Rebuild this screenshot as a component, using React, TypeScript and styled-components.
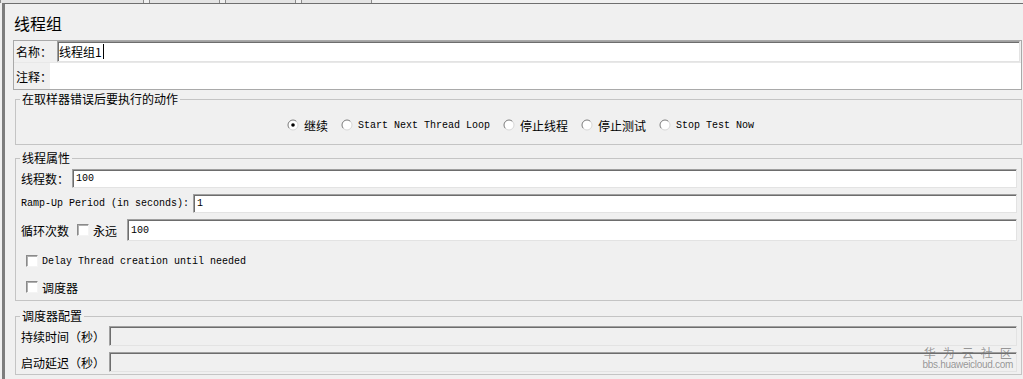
import React from 'react';
import styled, { createGlobalStyle } from 'styled-components';

const cjk = `"Noto Sans CJK SC", "Liberation Sans", sans-serif`;
const mono = `"Liberation Mono", "Noto Sans CJK SC", monospace`;

const GlobalStyle = createGlobalStyle`
  * { box-sizing: border-box; }
  html, body { margin: 0; padding: 0; background: #f0f0f0; }
  body { font-family: ${cjk}; font-size: 12px; color: #000; }
`;

const Screen = styled.div`
  position: relative;
  width: 1023px;
  height: 379px;
  overflow: hidden;
  background: #f0f0f0;
  display: flex;
  flex-direction: column;
`;

const TabStrip = styled.div`
  display: flex;
  gap: 5px;
  height: 3px;
  flex-shrink: 0;
`;

const TabStub = styled.div<{ $w: number }>`
  width: ${p => p.$w}px;
  background: #e4e4e4;
  border-left: 1px solid #8c8c8c;
  border-right: 1px solid #8c8c8c;
`;

const Frame = styled.div`
  flex: 1;
  margin-left: 2px;
  border-top: 1px solid #6f6f6f;
  border-left: 3px solid #7d7d7d;
  padding: 0 1px 0 8px;
  display: flex;
  flex-direction: column;
`;

const Title = styled.div`
  padding: 8px 0 0 1px;
  font-size: 16px;
  line-height: 22px;
  height: 30px;
`;

const NameBox = styled.div`
  margin-top: 6px;
  border: 1px solid #a9a9a9;
  display: flex;
  flex-direction: column;
`;

const NameRow = styled.div`
  display: flex;
  height: 21px;
`;

const CommentRow = styled.div`
  display: flex;
  height: 27px;
  border-top: 1px solid #e8e8e8;
`;

const RowLabel = styled.div<{ $w: number }>`
  width: ${p => p.$w}px;
  flex-shrink: 0;
  padding-left: 2px;
  display: flex;
  align-items: center;
  white-space: nowrap;
`;

const CommentArea = styled.div`
  flex: 1;
  background: #fff;
`;

const Field = styled.div<{ $disabled?: boolean; $mono?: boolean }>`
  flex: 1;
  display: flex;
  align-items: center;
  padding-left: ${p => (p.$mono ? 3 : 1)}px;
  margin-right: 1px;
  background: ${p => (p.$disabled ? '#f0f0f0' : '#fff')};
  border-top: 1px solid #a0a0a0;
  border-left: 1px solid #a0a0a0;
  border-bottom: 1px solid #e3e3e3;
  border-right: 1px solid #e3e3e3;
  box-shadow: inset 1px 1px 0 #6d6d6d;
  font-family: ${p => (p.$mono ? mono : cjk)};
  font-size: ${p => (p.$mono ? '10px' : '12px')};
  white-space: nowrap;
`;

const Caret = styled.span`
  display: inline-block;
  width: 1px;
  height: 15px;
  margin-left: 1px;
  background: #000;
`;

const Group = styled.fieldset<{ $top: number }>`
  margin: ${p => p.$top}px 0 0 2px;
  padding: 0 3px 0 4px;
  border: 1px solid #c4c4c4;
  min-width: 0;
  display: flex;
  flex-direction: column;
`;

const Legend = styled.legend`
  padding: 0 2px;
  font-size: 12px;
  line-height: 14px;
`;

const RadioRow = styled.div`
  height: 38px;
  display: flex;
  align-items: center;
  justify-content: center;
  gap: 13px;
  padding-left: 3px;
`;

const Choice = styled.label<{ $mono?: boolean }>`
  display: flex;
  align-items: center;
  gap: 5px;
  font-family: ${p => (p.$mono ? mono : cjk)};
  font-size: ${p => (p.$mono ? '10px' : '12px')};
  white-space: nowrap;
`;

const Stack = styled.div<{ $top: number; $bottom: number }>`
  display: flex;
  flex-direction: column;
  gap: 6px;
  padding: ${p => p.$top}px 0 ${p => p.$bottom}px 0;
`;

const FormRow = styled.div<{ $h: number; $mt?: number }>`
  display: flex;
  align-items: stretch;
  height: ${p => p.$h}px;
  margin-top: ${p => p.$mt || 0}px;
`;

const FieldLabel = styled.div<{ $w: number; $mono?: boolean }>`
  width: ${p => p.$w}px;
  flex-shrink: 0;
  display: flex;
  align-items: center;
  gap: 4px;
  padding-left: 1px;
  font-family: ${p => (p.$mono ? mono : cjk)};
  font-size: ${p => (p.$mono ? '10px' : '12px')};
  white-space: nowrap;
`;

const CheckRow = styled.label<{ $mono?: boolean }>`
  display: flex;
  align-items: center;
  gap: 4px;
  height: 20px;
  padding-left: 6px;
  font-family: ${p => (p.$mono ? mono : cjk)};
  font-size: ${p => (p.$mono ? '10px' : '12px')};
  white-space: nowrap;
`;

const Box = styled.span<{ $ml?: number }>`
  display: inline-block;
  width: 12px;
  height: 12px;
  margin-left: ${p => p.$ml || 0}px;
  background: #fff;
  border-top: 1px solid #8a8a8a;
  border-left: 1px solid #8a8a8a;
  border-bottom: 1px solid #f4f4f4;
  border-right: 1px solid #f4f4f4;
  box-shadow: inset 1px 1px 0 #b0b0b0;
`;

const Watermark = styled.div`
  position: absolute;
  right: 10px;
  bottom: 8px;
  display: flex;
  flex-direction: column;
  align-items: center;
  color: rgba(120, 120, 120, 0.75);
  pointer-events: none;
`;

const WmTitle = styled.div`
  font-family: ${cjk};
  font-size: 12px;
  line-height: 13px;
  letter-spacing: 7px;
  margin-right: -7px;
`;

const WmUrl = styled.div`
  font-family: "Liberation Sans", sans-serif;
  font-size: 10px;
  line-height: 12px;
  letter-spacing: -0.3px;
`;

function Radio({ checked }: { checked?: boolean }) {
  return (
    <svg width="12" height="12" viewBox="0 0 12 12">
      <circle cx="6" cy="6" r="5" fill="#fff" />
      <path d="M9.54 2.46 A5 5 0 0 0 2.46 9.54" stroke="#7a7a7a" strokeWidth="1" fill="none" />
      <path d="M2.46 9.54 A5 5 0 0 0 9.54 2.46" stroke="#d8d8d8" strokeWidth="1" fill="none" />
      {checked && <circle cx="6" cy="6" r="1.8" fill="#000" />}
    </svg>
  );
}

const actions = [
  { text: '继续', mono: false, checked: true },
  { text: 'Start Next Thread Loop', mono: true },
  { text: '停止线程', mono: false },
  { text: '停止测试', mono: false },
  { text: 'Stop Test Now', mono: true },
];

export default function App() {
  return (
    <Screen>
      <GlobalStyle />
      <TabStrip>
        <TabStub $w={144} />
        <TabStub $w={71} />
        <TabStub $w={71} />
        <TabStub $w={71} />
      </TabStrip>
      <Frame>
        <Title>线程组</Title>

        <NameBox>
          <NameRow>
            <RowLabel $w={43}>名称：</RowLabel>
            <Field>
              线程组1<Caret />
            </Field>
          </NameRow>
          <CommentRow>
            <RowLabel $w={36}>注释：</RowLabel>
            <CommentArea />
          </CommentRow>
        </NameBox>

        <Group $top={2}>
          <Legend>在取样器错误后要执行的动作</Legend>
          <RadioRow>
            {actions.map(a => (
              <Choice key={a.text} $mono={a.mono}>
                <Radio checked={a.checked} />
                {a.text}
              </Choice>
            ))}
          </RadioRow>
        </Group>

        <Group $top={6}>
          <Legend>线程属性</Legend>
          <Stack $top={4} $bottom={3}>
            <FormRow $h={19}>
              <FieldLabel $w={52}>线程数：</FieldLabel>
              <Field $mono>100</Field>
            </FormRow>
            <FormRow $h={19}>
              <FieldLabel $w={173} $mono>Ramp-Up Period (in seconds):</FieldLabel>
              <Field $mono>1</Field>
            </FormRow>
            <FormRow $h={22}>
              <FieldLabel $w={107}>
                循环次数
                <Box $ml={4} />
                永远
              </FieldLabel>
              <Field $mono>100</Field>
            </FormRow>
            <FormRow $h={20} $mt={4}>
              <CheckRow $mono>
                <Box />
                Delay Thread creation until needed
              </CheckRow>
            </FormRow>
            <FormRow $h={20}>
              <CheckRow>
                <Box />
                调度器
              </CheckRow>
            </FormRow>
          </Stack>
        </Group>

        <Group $top={8}>
          <Legend>调度器配置</Legend>
          <Stack $top={3} $bottom={2}>
            <FormRow $h={20}>
              <FieldLabel $w={89}>持续时间（秒）</FieldLabel>
              <Field $disabled />
            </FormRow>
            <FormRow $h={20}>
              <FieldLabel $w={89}>启动延迟（秒）</FieldLabel>
              <Field $disabled />
            </FormRow>
          </Stack>
        </Group>
      </Frame>
      <Watermark>
        <WmTitle>华为云社区</WmTitle>
        <WmUrl>bbs.huaweicloud.com</WmUrl>
      </Watermark>
    </Screen>
  );
}
